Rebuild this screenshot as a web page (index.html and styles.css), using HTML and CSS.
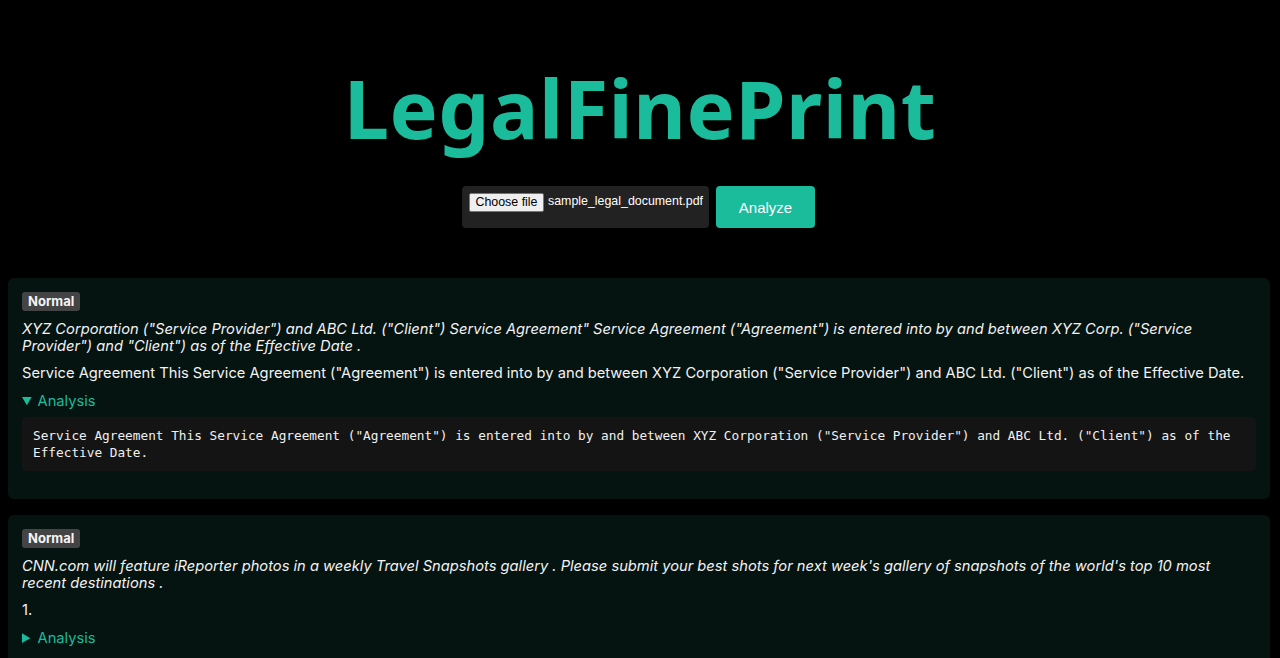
FILE: index.html
```html
<!DOCTYPE html>
<html lang="en">
<head>
<meta charset="utf-8">
<title>LegalFinePrint</title>
<link rel="stylesheet" href="styles.css">
</head>
<body>
<header class="hero">
  <h1 class="title">LegalFinePrint</h1>
  <form class="upload">
    <div class="file-box">
      <span class="file-btn">Choose file</span>
      <span class="file-name">sample_legal_document.pdf</span>
    </div>
    <button type="button" class="analyze">Analyze</button>
  </form>
</header>
<main class="results">
  <section class="card">
    <span class="badge">Normal</span>
    <p class="summary-text">XYZ Corporation ("Service Provider") and ABC Ltd. ("Client") Service Agreement" Service Agreement ("Agreement") is entered into by and between XYZ Corp. ("Service Provider") and "Client") as of the Effective Date .</p>
    <p class="clause">Service Agreement This Service Agreement ("Agreement") is entered into by and between XYZ Corporation ("Service Provider") and ABC Ltd. ("Client") as of the Effective Date.</p>
    <details class="analysis" open>
      <summary>Analysis</summary>
      <pre class="code">Service Agreement This Service Agreement ("Agreement") is entered into by and between XYZ Corporation ("Service Provider") and ABC Ltd. ("Client") as of the Effective Date.</pre>
    </details>
  </section>
  <section class="card">
    <span class="badge">Normal</span>
    <p class="summary-text">CNN.com will feature iReporter photos in a weekly Travel Snapshots gallery . Please submit your best shots for next week's gallery of snapshots of the world's top 10 most recent destinations .</p>
    <p class="clause">1.</p>
    <details class="analysis">
      <summary>Analysis</summary>
      <pre class="code">1.</pre>
    </details>
  </section>
</main>
</body>
</html>
```
FILE: styles.css
```css
* { box-sizing: border-box; }
html, body { background: #000; }
body {
  margin: 0;
  color: #f2f2f2;
  font-family: Inter, "Noto Sans", sans-serif;
}
.hero {
  display: flex;
  flex-direction: column;
  align-items: center;
  padding-top: 58px;
}
.title {
  margin: 0;
  font-family: "Noto Sans", sans-serif;
  font-weight: 700;
  font-size: 81px;
  line-height: 100px;
  letter-spacing: 0.5px;
  color: #1abc9c;
}
.upload {
  display: flex;
  gap: 7px;
  margin: 28px 3px 0 0;
}
.file-box {
  display: flex;
  align-items: flex-start;
  gap: 4px;
  width: 247px;
  height: 42px;
  padding: 7px;
  background: #222;
  border-radius: 4px;
  font-family: "Liberation Sans", Arial, sans-serif;
  font-size: 12.4px;
  white-space: nowrap;
}
.file-btn {
  flex: none;
  width: 75px;
  height: 19px;
  padding: 1px 0;
  text-align: center;
  background: #efefef;
  color: #000;
  border: 1px solid #767676;
  border-radius: 2px;
  line-height: 15px;
}
.file-name {
  color: #fff;
  line-height: 17px;
}
.analyze {
  width: 99px;
  height: 42px;
  border: 0;
  border-radius: 4px;
  background: #1abc9c;
  color: #fff;
  font-family: "Liberation Sans", Arial, sans-serif;
  font-size: 15px;
}
.results {
  margin: 50px 10px 0 8px;
  display: flex;
  flex-direction: column;
  gap: 16px;
}
.card {
  background: #051311;
  border-radius: 6px;
  padding: 14px 14px 14px;
}
.badge {
  display: inline-block;
  vertical-align: top;
  background: #444;
  color: #f4f4f4;
  font-weight: 700;
  font-size: 13px;
  line-height: 19px;
  padding: 0 6px;
  border-radius: 3px;
}
.summary-text {
  margin: 9px 0 0;
  font-style: italic;
  font-size: 14.7px;
  line-height: 17px;
}
.clause {
  margin: 9px 0 0;
  font-size: 14.7px;
  line-height: 18px;
}
.analysis {
  margin: 10px 0 14px;
}
.analysis summary {
  color: #1abc9c;
  font-size: 14.7px;
  line-height: 18px;
  cursor: pointer;
}
.code {
  margin: 7px 0 0;
  padding: 10px 11px;
  background: #141414;
  border-radius: 4px;
  font-family: "DejaVu Sans Mono", monospace;
  font-size: 12.75px;
  line-height: 17px;
  white-space: pre-wrap;
  color: #f0f0f0;
}
```
